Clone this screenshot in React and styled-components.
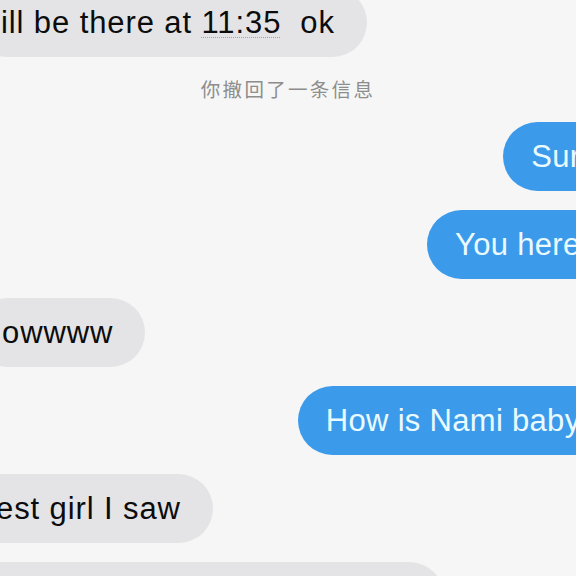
import React from "react";
import styled, { createGlobalStyle } from "styled-components";

const GlobalStyle = createGlobalStyle`
  html, body {
    margin: 0;
    padding: 0;
    background: #f6f6f6;
    overflow: hidden;
  }
  body {
    width: 576px;
    height: 576px;
    font-family: "Liberation Sans", Arial, "Noto Sans CJK SC", sans-serif;
  }
`;

const Thread = styled.div`
  width: 626px;
  margin-top: -12px;
  display: flex;
  flex-direction: column;
  gap: 19px;
`;

const Row = styled.div`
  display: flex;
  justify-content: ${(props) => (props.$mine ? "flex-end" : "flex-start")};
`;

const Bubble = styled.div`
  box-sizing: border-box;
  height: 69px;
  padding: ${(props) => (props.$mine ? "0 28px" : "0 32px 0 28px")};
  margin-left: ${(props) => props.$shift || 0}px;
  border-radius: 35px;
  display: flex;
  align-items: center;
  white-space: pre;
  font-size: 31px;
  letter-spacing: ${(props) => (props.$mine ? "0.3px" : "0.9px")};
  background: ${(props) => (props.$mine ? "#3c9aeb" : "#e4e4e6")};
  color: ${(props) => (props.$mine ? "#eafbff" : "#0c0c0c")};
`;

const TimeLink = styled.span`
  text-decoration: underline dotted #a2a2a2;
  text-decoration-thickness: 1px;
  text-underline-offset: 4px;
`;

const Notice = styled.div`
  margin: 1px 0 2px;
  width: 576px;
  text-align: center;
  font-family: "Noto Sans CJK SC", sans-serif;
  font-size: 19.5px;
  line-height: 24px;
  letter-spacing: 2.3px;
  color: #8d8d8d;
`;

const messages = [
  { id: 1, shift: -27, text: <>ill be there at <TimeLink>11:35</TimeLink>  ok</> },
  { id: 2, notice: "你撤回了一条信息" },
  { id: 3, mine: true, text: "Sure" },
  { id: 4, mine: true, text: "You here?" },
  { id: 5, shift: -26, text: "owwww" },
  { id: 6, mine: true, text: "How is Nami baby?" },
  { id: 7, shift: -32, text: "est girl I saw" },
  { id: 8, shift: -45, text: "She is so cute and so little lol" },
];

const App = () => {
  return (
    <>
      <GlobalStyle />
      <Thread>
        {messages.map((m) =>
          m.notice ? (
            <Notice key={m.id}>{m.notice}</Notice>
          ) : (
            <Row key={m.id} $mine={m.mine}>
              <Bubble $mine={m.mine} $shift={m.shift}>
                {m.text}
              </Bubble>
            </Row>
          )
        )}
      </Thread>
    </>
  );
};

export default App;
